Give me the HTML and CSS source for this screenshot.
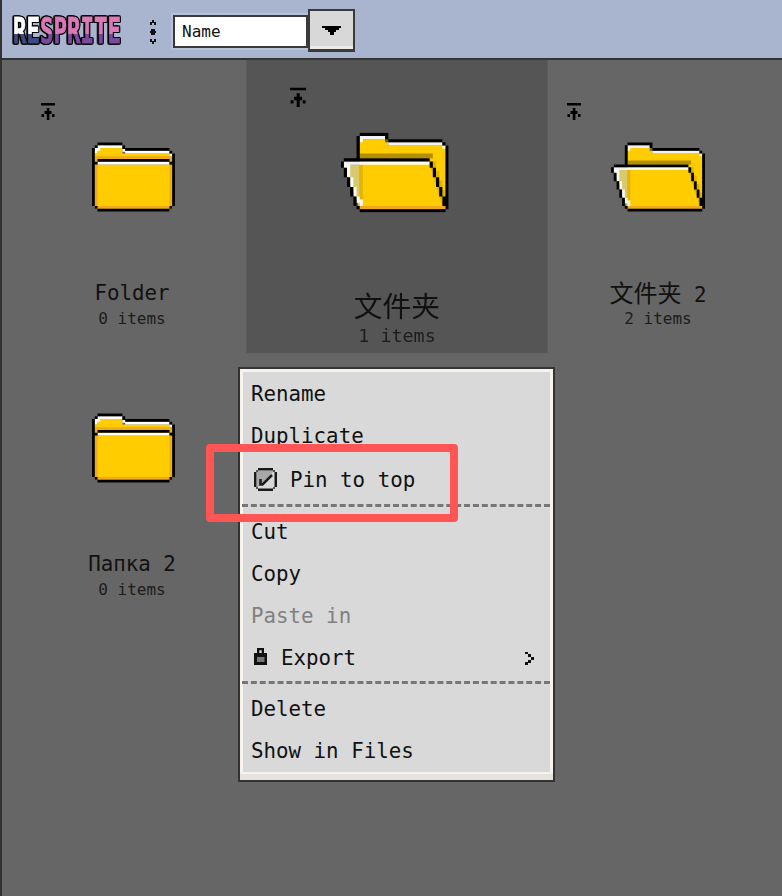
FILE: index.html
```html
<!DOCTYPE html>
<html lang="en">
<head>
<meta charset="utf-8">
<title>Resprite</title>
<link rel="stylesheet" href="styles.css">
</head>
<body>
<svg class="defs" width="0" height="0" aria-hidden="true">
  <symbol id="pin" viewBox="0 0 14 17">
    <path d="M0 0h14v2.500H0z M5.800 5h2.600v12H5.800z M3.500 8h7v3h-7z M0.500 11H3v3H0.500z M11 11h2.500v3H11z" fill="#000"/>
  </symbol>
  <symbol id="closed" viewBox="0 0 30 25">
    <path d="M2 2h9v2h17v3H1V4h1z" fill="#ffcc00"/>
    <path d="M1 5h1v2H1z M28 5h1v2h-1z M2 5h26v1H2z" fill="#efa91a"/>
    <path d="M1 8h28v16H1z" fill="#ffcc00"/>
    <path d="M1 8h1v15H1z M28 8h1v15h-1z M2 23h26v1H2z" fill="#efa91a"/>
    <path d="M2 1h9v1H2z M1 2h2v1H1z M1 3h1v1H1z M12 3h16v1H12z M11 2.400h1v1h-1z M28 4h1v1h-1z M2 7h26v1H2z" fill="#fff"/>
    <path d="M2 0h9v1H2z M1 1h1v1H1z M0 2h1v21H0z M11 1h1v1.400h-1z M12 2h16v1H12z M28 3h1v1h-1z M29 4h1v19h-1z M1 23h1v1H1z M28 23h1v1h-1z M2 24h26v1H2z M2 6h26v1H2z M1 7h1v1H1z M28 7h1v1h-1z" fill="#000"/>
  </symbol>
  <symbol id="open" viewBox="0 0 34 25">
    <path d="M6 2h8v1h1v1h17v20H6z M32 4h1v20h-1z" fill="#ffcc00"/>
    <path d="M6 6.500h23v1.500H6z" fill="#000" fill-opacity=".3"/>
    <path d="M28 9h2v3h1v3h1v3h1v5h-1.500l-4-13z" fill="#000" fill-opacity=".12"/>
    <path d="M1 10h5v14z" fill="#d8c870"/>
    <path d="M6 10h22l4 13H6z" fill="#ffcc00"/>
    <path d="M6 10h1v13H6z" fill="#e5b400"/>
    <path d="M6 23h27v1H6z" fill="#efa91a"/>
    <path d="M6 1h8v1H6z M6 2h1v1H6z M15 3h17v1H15z M32 4h1v1h-1z M1 9h27v1H1z M1 10h2v1H1z M2 11h1v3H2z M3 14h1v3H3z M4 17h1v3H4z M5 20h1v2H5z M6 21h1v2H6z" fill="#fff" fill-opacity=".92"/>
    <path d="M6 0h9v1H6z M5 1h1v7H5z M14 1h1v1h-1z M15 2h17v1H15z M32 3h1v1h-1z M33 4h1v20h-1z M1 8h27v1H1z M0 9h1v2H0z M1 11h1v3H1z M2 14h1v3H2z M3 17h1v3H3z M4 20h1v3H4z M5 23h1v1H5z M6 24h27v1H6z M28 9h1v2h-1z M29 11h1v3h-1z M30 14h1v3h-1z M31 17h1v3h-1z M32 20h1v3h-1z" fill="#000"/>
  </symbol>
</svg>

<div class="app">
  <header class="toolbar">
    <div class="logo"><span class="logo-re">RE</span><span class="logo-sprite">SPRITE</span></div>
    <svg class="sort-icon" viewBox="0 0 10 24" width="10" height="24" aria-hidden="true">
      <path d="M4 0h2v2h2v3H6V3H4v2H2V2h2z M3 9h4v2h1v2H7v2H3v-2H2v-2h1z M2 19h2v2h2v-2h2v3H6v2H4v-2H2z" fill="#111"/>
    </svg>
    <div class="sort-select">
      <div class="select-field">Name</div>
      <div class="select-button">
        <svg viewBox="0 0 19 9" width="19" height="9" aria-hidden="true"><path d="M0 0h19v2h-2v2h-3v2h-2v3H8V6H6V4H3V2H0z" fill="#000"/></svg>
      </div>
    </div>
  </header>

  <main class="grid">
    <article class="tile">
      <svg class="pin" aria-hidden="true"><use href="#pin"/></svg>
      <svg class="folder folder-closed" aria-hidden="true"><use href="#closed"/></svg>
      <div class="name">Folder</div>
      <div class="count">0 items</div>
    </article>
    <article class="tile tile-active">
      <svg class="pin" aria-hidden="true"><use href="#pin"/></svg>
      <svg class="folder folder-open" aria-hidden="true"><use href="#open"/></svg>
      <div class="name"><span class="cjk">文件夹</span></div>
      <div class="count">1 items</div>
    </article>
    <article class="tile">
      <svg class="pin" aria-hidden="true"><use href="#pin"/></svg>
      <svg class="folder folder-open" aria-hidden="true"><use href="#open"/></svg>
      <div class="name"><span class="cjk">文件夹</span> 2</div>
      <div class="count">2 items</div>
    </article>
    <article class="tile tile-plain">
      <svg class="folder folder-closed" aria-hidden="true"><use href="#closed"/></svg>
      <div class="name">Папка 2</div>
      <div class="count">0 items</div>
    </article>
  </main>

  <nav class="menu">
    <div class="menu-inner">
      <div class="item">Rename</div>
      <div class="item">Duplicate</div>
      <div class="item item-pin">
        <svg class="check" viewBox="0 0 23 23" width="23" height="23" aria-hidden="true">
          <path d="M3 3h17L3 20z" fill="#a8a8a8"/>
          <path d="M4 0h15v2.500H4z M4 20.500h15V23H4z M0 4h2.500v15H0z M20.500 4H23v15h-2.500z" fill="#1a1a1a"/>
          <path d="M2 2h2v2H2z M19 2h2v2h-2z M2 19h2v2H2z M19 19h2v2h-2z" fill="#555"/>
          <path d="M6.500 11v5.500h2L18 7" fill="none" stroke="#1a1a1a" stroke-width="2.500"/>
        </svg>
        <span>Pin to top</span>
      </div>
      <div class="sep sep-a"></div>
      <div class="item">Cut</div>
      <div class="item">Copy</div>
      <div class="item item-off">Paste in</div>
      <div class="item item-export">
        <svg class="lock" viewBox="0 0 13 17" width="13" height="17" aria-hidden="true">
          <path d="M3 0h7v5h3v12H0V5h3z M5.300 2.200V5h2.400V2.200z" fill="#111" fill-rule="evenodd"/>
          <path d="M3 9h7.500v5H3z" fill="#777"/>
        </svg>
        <span>Export</span>
        <svg class="chevron" viewBox="0 0 9 13" width="9" height="13" aria-hidden="true">
          <path d="M0 0h3v2h3v3h3v3H6v3H3v2H0v-3h3V8h3V5H3V2H0z" fill="#111"/>
        </svg>
      </div>
      <div class="sep sep-b"></div>
      <div class="item">Delete</div>
      <div class="item">Show in Files</div>
    </div>
  </nav>

  <div class="callout"></div>
</div>
</body>
</html>
```

FILE: styles.css
```css
* {
  box-sizing: border-box;
}

html,
body {
  margin: 0;
  height: 100%;
  overflow: hidden;
}

body {
  background: #666;
  color: #111;
  font-family: "DejaVu Sans Mono", "Noto Sans CJK SC", monospace;
}

.defs {
  position: absolute;
}

.app {
  position: relative;
  height: 896px;
  width: 782px;
  overflow: hidden;
  background: #666;
  border-left: 2px solid #333;
}

/* toolbar */
.toolbar {
  height: 60px;
  display: flex;
  align-items: center;
  background: #a9b5cf;
  border-bottom: 2px solid #333;
  padding-left: 11px;
}

.logo {
  width: 110px;
  height: 30px;
  margin-top: 4px;
  font-size: 35px;
  line-height: 30px;
  font-weight: 700;
  white-space: nowrap;
  transform: scaleX(0.64);
  transform-origin: left center;
  filter: drop-shadow(1.500px 0 0 #000) drop-shadow(-1.500px 0 0 #000) drop-shadow(0 1.500px 0 #000) drop-shadow(0 -1px 0 #000);
}

.logo-re,
.logo-sprite {
  -webkit-background-clip: text;
  background-clip: text;
  color: transparent;
  -webkit-text-stroke: 1px transparent;
}

.logo-re {
  background-image: linear-gradient(#fff 0 58%, #3f4a80 58%);
}

.logo-sprite {
  background-image: linear-gradient(#dc78b8 0 58%, #7a4a9c 58%);
}

.sort-icon {
  margin: 6px 15px 0 25px;
}

.sort-select {
  display: flex;
  align-items: center;
  margin-top: 5px;
}

.select-field {
  width: 135px;
  height: 33px;
  background: #fff;
  border: 2px solid #3a3a3a;
  box-shadow: 0 0 0 2px #b7c1d8;
  padding-left: 7px;
  font-size: 16px;
  line-height: 30px;
  color: #111;
}

.select-button {
  width: 47px;
  height: 43px;
  margin-bottom: 2px;
  display: flex;
  align-items: center;
  justify-content: center;
  background: #d8d8d8;
  border: 2px solid #3a3a3a;
  border-bottom-width: 3px;
  box-shadow: inset 0 -3px 0 #ecebe8;
}

/* folder grid */
.grid {
  display: grid;
  grid-template-columns: 265px 261px 262px;
  grid-auto-rows: 255px;
  row-gap: 16px;
  padding-top: 19px;
  margin-left: -1px;
}

.tile {
  width: 262px;
  display: flex;
  flex-direction: column;
  align-items: center;
}

.tile-active {
  background: #555;
  transform: scale(1.15);
}

.tile-plain {
  padding-top: 63px;
}

.pin {
  flex: none;
  align-self: flex-start;
  width: 14px;
  height: 17px;
  margin: 24px 0 22px 40px;
}

.tile-active .pin {
  margin-left: 38px;
}

.tile-active .folder {
  margin-right: 4px;
}

.tile-active .cjk {
  font-size: 25px;
}

.folder {
  flex: none;
  width: 83px;
  height: 70px;
}

.folder-closed {
  margin-left: 2px;
}

.folder-open {
  width: 94px;
}

.name {
  height: 26px;
  margin-top: 68px;
  font-size: 20.800px;
  line-height: 26px;
  white-space: nowrap;
}

.cjk {
  font-family: "Noto Sans CJK SC", sans-serif;
  font-size: 24px;
  line-height: 1;
}

.count {
  font-size: 16px;
  line-height: 26px;
  color: #1c1c1c;
  white-space: nowrap;
}

/* context menu */
.menu {
  position: absolute;
  left: 236px;
  top: 367px;
  width: 317px;
  background: #e6e2de;
  border: 2px solid #333;
  padding-bottom: 6px;
}

.menu-inner {
  background: #d9d9d9;
  border: solid #f6f2ec;
  border-width: 3px 3px 2px;
  padding-top: 1px;
}

.item {
  height: 42px;
  display: flex;
  align-items: center;
  padding-left: 8px;
  font-size: 20.800px;
  color: #111;
  white-space: nowrap;
}

.item-off {
  color: #808080;
}

.item-pin {
  height: 43px;
  padding-top: 2px;
  padding-left: 11px;
  column-gap: 13px;
}

.item-export {
  padding-left: 11px;
  column-gap: 14px;
}

.lock {
  margin-bottom: 3px;
}

.chevron {
  margin-left: auto;
  margin-right: 16px;
}

.sep {
  border-top: 3px dashed #777;
  margin-left: -1px;
}

.sep-a {
  height: 7px;
  margin-top: 4px;
}

.sep-b {
  height: 7px;
  margin-top: 2px;
}

/* annotation drawn over the screenshot */
.callout {
  position: absolute;
  left: 204px;
  top: 444px;
  width: 252px;
  height: 78px;
  border: 8px solid #ff5555;
  border-radius: 4px;
}
```
